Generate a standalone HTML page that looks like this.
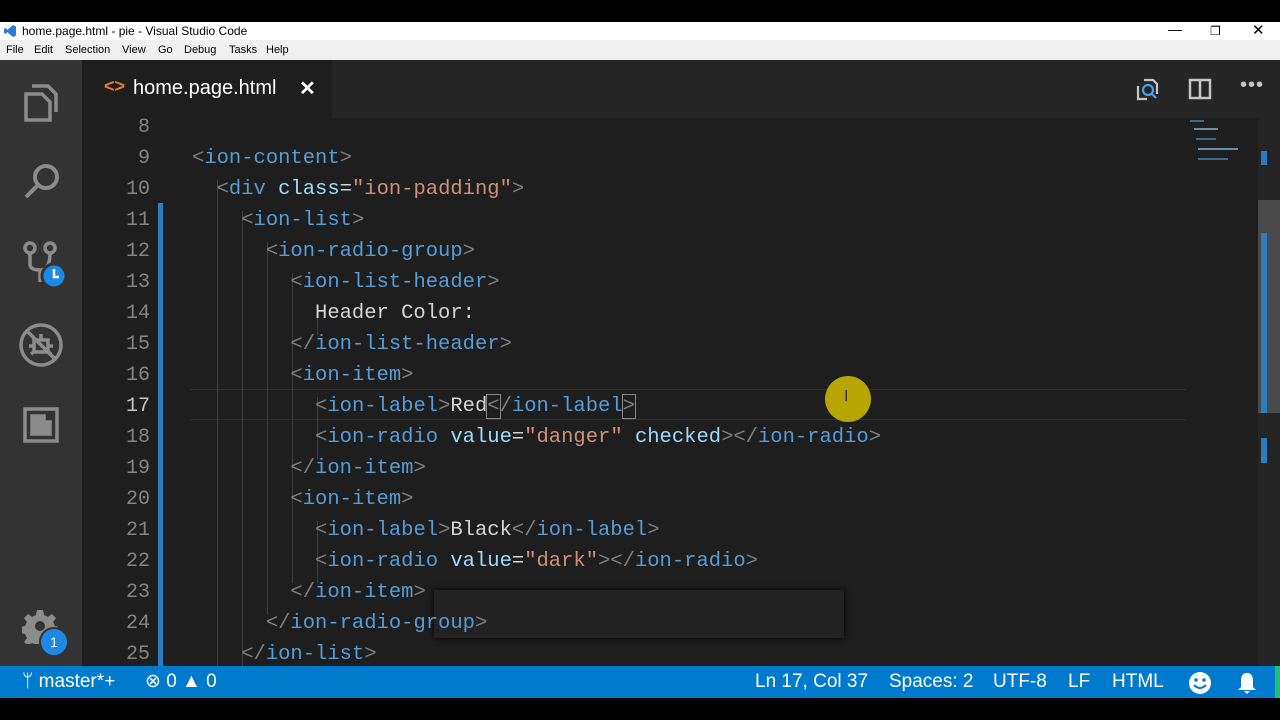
<!DOCTYPE html>
<html><head><style>
*{margin:0;padding:0;box-sizing:border-box}
body{width:1280px;height:720px;background:#000;position:relative;overflow:hidden;font-family:"Liberation Sans",sans-serif}
.abs{position:absolute}
.code{font-family:"Liberation Mono",monospace;font-size:20.5px;white-space:pre;color:#d4d4d4}
.t{color:#569cd6}.b{color:#808080}.a{color:#9cdcfe}.s{color:#ce9178}
.ln{position:absolute;left:0;width:68px;text-align:right;color:#858585;font-family:"Liberation Mono",monospace;font-size:20px}
.ig{position:absolute;width:1px;background:#404040}
</style></head><body>
<div class="abs" style="top:22px;left:0;width:1280px;height:18px;background:#fff;font-size:12px;color:#000;line-height:18px">
 <svg class="abs" style="left:3px;top:2px" width="14" height="14" viewBox="0 0 14 14"><path d="M10 1L13 2.5V11.5L10 13L3 7Z M10 4V10L6 7Z M1 5L3 4L5 7L3 10L1 9Z" fill="#2b7bd1"/></svg>
 <span style="position:absolute;left:22px">home.page.html - pie - Visual Studio Code</span>
 <span style="position:absolute;left:1168px;top:-2px;font-size:14px">—</span>
 <span style="position:absolute;left:1210px;font-size:12px">❐</span>
 <span style="position:absolute;left:1252px;font-size:15px">✕</span>
</div>
<div class="abs" style="top:40px;left:0;width:1280px;height:20px;background:#f0f0f0;font-size:11px;color:#000;line-height:20px">
 <span class="abs" style="left:6px">File</span><span class="abs" style="left:34px">Edit</span><span class="abs" style="left:65px">Selection</span><span class="abs" style="left:122px">View</span><span class="abs" style="left:158px">Go</span><span class="abs" style="left:184px">Debug</span><span class="abs" style="left:229px">Tasks</span><span class="abs" style="left:266px">Help</span>
</div>
<div class="abs" style="top:60px;left:0;width:82px;height:606px;background:#333">
 <svg class="abs" style="left:22px;top:22px" width="38" height="40" viewBox="0 0 38 40" fill="none" stroke="#8c8c8c" stroke-width="3.5"><path d="M10 4H26L34 12V30"/><path d="M4 12H20L28 20V38H4Z"/></svg>
 <svg class="abs" style="left:22px;top:102px" width="40" height="40" viewBox="0 0 40 40" fill="none" stroke="#8c8c8c" stroke-width="4"><circle cx="24" cy="15" r="11"/><path d="M16 23L4 35"/></svg>
 <svg class="abs" style="left:22px;top:180px" width="50" height="52" viewBox="0 0 50 52" fill="none" stroke="#8c8c8c" stroke-width="3.5"><circle cx="8" cy="8" r="5"/><circle cx="28" cy="8" r="5"/><path d="M8 13V24Q8 30 18 30Q28 30 28 13"/><path d="M18 30V42"/><circle cx="32" cy="36" r="12" fill="#1e88e5" stroke="#333" stroke-width="3"/><path d="M32 29V37H37" stroke="#fff" stroke-width="2.5"/></svg>
 <svg class="abs" style="left:17px;top:262px" width="48" height="46" viewBox="0 0 48 46" fill="none" stroke="#8c8c8c" stroke-width="3.5"><circle cx="24" cy="23" r="20"/><path d="M10 9L38 37"/><path d="M17 18H31V30H17Z M24 12V18 M12 24H17 M31 24H36 M14 32L18 29 M34 32L30 29"/></svg>
 <svg class="abs" style="left:22px;top:346px" width="38" height="38" viewBox="0 0 38 38" fill="none" stroke="#8c8c8c" stroke-width="3.5"><path d="M3 3H35V35H3Z"/><path d="M10 10H22V16H28V28H10Z" fill="#8c8c8c"/></svg>
 <svg class="abs" style="left:22px;top:548px" width="36" height="36" viewBox="0 0 36 36"><path fill="#8c8c8c" d="M15 2h6l1 5 4 2 4-3 4 4-3 4 2 4 5 1v6l-5 1-2 4 3 4-4 4-4-3-4 2-1 5h-6l-1-5-4-2-4 3-4-4 3-4-2-4-5-1v-6l5-1 2-4-3-4 4-4 4 3 4-2z"/><circle cx="18" cy="18" r="5" fill="#333"/></svg>
 <div class="abs" style="left:39px;top:567px;width:30px;height:30px;border-radius:50%;background:#1e88e5;border:2px solid #333;color:#fff;font-size:14px;text-align:center;line-height:26px">1</div>
</div>
<div class="abs" style="top:60px;left:82px;width:1198px;height:58px;background:#252526">
 <div class="abs" style="left:0;top:0;width:250px;height:58px;background:#1e1e1e">
  <span class="abs" style="left:22px;top:16px;color:#e37933;font-size:18px;font-weight:bold">&lt;&gt;</span>
  <span class="abs" style="left:51px;top:17px;color:#fff;font-size:20px">home.page.html</span>
  <span class="abs" style="left:217px;top:16px;color:#fff;font-size:20px;font-weight:bold">✕</span>
 </div>
 <svg class="abs" style="left:1053px;top:17px" width="26" height="26" viewBox="0 0 26 26" fill="none" stroke-width="2.2"><path d="M9 3H18L22 7V17" stroke="#c5c5c5"/><path d="M3 9V22H12" stroke="#c5c5c5"/><circle cx="13" cy="13" r="5" stroke="#4aa0e6"/><path d="M16.5 16.5L21 21" stroke="#4aa0e6"/></svg>
 <svg class="abs" style="left:1106px;top:18px" width="24" height="22" viewBox="0 0 24 22" fill="none" stroke="#c5c5c5" stroke-width="2.5"><path d="M2 2H22V20H2Z M12 2V20"/></svg>
 <span class="abs" style="left:1158px;top:14px;color:#c5c5c5;font-size:20px;letter-spacing:1px">•••</span>
</div>
<div class="abs" style="top:118px;left:82px;width:1176px;height:548px;background:#1e1e1e;overflow:hidden">
 <div class="abs" style="left:76px;top:85px;width:5px;height:463px;background:#2c7cc0"></div>
 <div class="abs" style="left:108px;top:271px;width:996px;height:31px;border-top:1px solid #303030;border-bottom:1px solid #303030"></div>
 <div class="abs" style="left:352px;top:472px;width:410px;height:48px;background:#222;box-shadow:0 0 6px #000"></div>
 <div class="ig" style="left:135px;top:62px;height:486px"></div>
 <div class="ig" style="left:160px;top:93px;height:455px"></div>
 <div class="ig" style="left:185px;top:124px;height:372px"></div>
 <div class="ig" style="left:210px;top:155px;height:310px"></div>
 <div class="ig" style="left:235px;top:186px;height:31px"></div>
 <div class="ig" style="left:235px;top:279px;height:62px"></div>
 <div class="ig" style="left:235px;top:403px;height:62px"></div>
 <div style="position:absolute;left:0;top:-6px;line-height:31px">
 <div class="ln" style="top:0">8</div><div class="ln" style="top:31px">9</div><div class="ln" style="top:62px">10</div><div class="ln" style="top:93px">11</div><div class="ln" style="top:124px">12</div><div class="ln" style="top:155px">13</div><div class="ln" style="top:186px">14</div><div class="ln" style="top:217px">15</div><div class="ln" style="top:248px">16</div><div class="ln" style="top:279px;color:#c6c6c6">17</div><div class="ln" style="top:310px">18</div><div class="ln" style="top:341px">19</div><div class="ln" style="top:372px">20</div><div class="ln" style="top:403px">21</div><div class="ln" style="top:434px">22</div><div class="ln" style="top:465px">23</div><div class="ln" style="top:496px">24</div><div class="ln" style="top:527px">25</div>
 <div class="code abs" style="left:110px;top:31px"><span class="b">&lt;</span><span class="t">ion-content</span><span class="b">&gt;</span>
  <span class="b">&lt;</span><span class="t">div</span> <span class="a">class</span>=<span class="s">"ion-padding"</span><span class="b">&gt;</span>
    <span class="b">&lt;</span><span class="t">ion-list</span><span class="b">&gt;</span>
      <span class="b">&lt;</span><span class="t">ion-radio-group</span><span class="b">&gt;</span>
        <span class="b">&lt;</span><span class="t">ion-list-header</span><span class="b">&gt;</span>
          Header Color:
        <span class="b">&lt;/</span><span class="t">ion-list-header</span><span class="b">&gt;</span>
        <span class="b">&lt;</span><span class="t">ion-item</span><span class="b">&gt;</span>
          <span class="b">&lt;</span><span class="t">ion-label</span><span class="b">&gt;</span>Red<span class="b" style="outline:1px solid #888">&lt;</span><span class="b">/</span><span class="t">ion-label</span><span class="b" style="outline:1px solid #888">&gt;</span>
          <span class="b">&lt;</span><span class="t">ion-radio</span> <span class="a">value</span>=<span class="s">"danger"</span> <span class="a">checked</span><span class="b">&gt;&lt;/</span><span class="t">ion-radio</span><span class="b">&gt;</span>
        <span class="b">&lt;/</span><span class="t">ion-item</span><span class="b">&gt;</span>
        <span class="b">&lt;</span><span class="t">ion-item</span><span class="b">&gt;</span>
          <span class="b">&lt;</span><span class="t">ion-label</span><span class="b">&gt;</span>Black<span class="b">&lt;/</span><span class="t">ion-label</span><span class="b">&gt;</span>
          <span class="b">&lt;</span><span class="t">ion-radio</span> <span class="a">value</span>=<span class="s">"dark"</span><span class="b">&gt;&lt;/</span><span class="t">ion-radio</span><span class="b">&gt;</span>
        <span class="b">&lt;/</span><span class="t">ion-item</span><span class="b">&gt;</span>
      <span class="b">&lt;/</span><span class="t">ion-radio-group</span><span class="b">&gt;</span>
    <span class="b">&lt;/</span><span class="t">ion-list</span><span class="b">&gt;</span></div>
 </div>
 <div class="abs" style="left:743px;top:258px;width:46px;height:46px;border-radius:50%;background:#c8b400;opacity:.9"></div>
 <span class="abs" style="left:762px;top:270px;color:#333;font-size:16px">I</span>
 <div class="abs" style="left:1104px;top:0;width:72px;height:60px;opacity:.6">
  <div class="abs" style="left:4px;top:2px;width:14px;height:2px;background:#569cd6"></div>
  <div class="abs" style="left:8px;top:10px;width:24px;height:2px;background:#9cdcfe"></div>
  <div class="abs" style="left:10px;top:20px;width:20px;height:2px;background:#569cd6"></div>
  <div class="abs" style="left:12px;top:30px;width:40px;height:2px;background:#9cdcfe"></div>
  <div class="abs" style="left:12px;top:40px;width:30px;height:2px;background:#569cd6"></div>
 </div>
</div>
<div class="abs" style="top:118px;left:1258px;width:22px;height:548px;background:#252526">
 <div class="abs" style="left:0;top:82px;width:22px;height:213px;background:#4a4a4a"></div>
 <div class="abs" style="left:3px;top:33px;width:6px;height:14px;background:#2c7cc0"></div>
 <div class="abs" style="left:3px;top:115px;width:6px;height:180px;background:#2c7cc0"></div>
 <div class="abs" style="left:3px;top:320px;width:6px;height:25px;background:#2c7cc0"></div>
</div>
<div class="abs" style="top:666px;left:0;width:1280px;height:32px;background:#007acc;color:#fff;font-size:19px;line-height:32px">
 <span class="abs" style="left:22px">ᛘ master*+</span>
 <span class="abs" style="left:145px">⊗ 0 ▲ 0</span>
 <span class="abs" style="left:755px">Ln 17, Col 37</span>
 <span class="abs" style="left:889px">Spaces: 2</span>
 <span class="abs" style="left:993px">UTF-8</span>
 <span class="abs" style="left:1068px">LF</span>
 <span class="abs" style="left:1112px">HTML</span>
 <svg class="abs" style="left:1188px;top:5px" width="24" height="24" viewBox="0 0 24 24"><circle cx="12" cy="12" r="11" fill="#fff"/><circle cx="8" cy="9" r="1.8" fill="#007acc"/><circle cx="16" cy="9" r="1.8" fill="#007acc"/><path d="M6 14Q12 20 18 14" stroke="#007acc" stroke-width="2" fill="none"/></svg>
 <svg class="abs" style="left:1236px;top:6px" width="22" height="22" viewBox="0 0 22 22"><path d="M11 1C6 1 5 5 5 9V15L2 18H20L17 15V9C17 5 16 1 11 1Z M8 19H14L11 22Z" fill="#fff"/></svg>
 <div class="abs" style="left:1275px;top:0;width:5px;height:32px;background:#1fbf6f"></div>
</div>
</body></html>
